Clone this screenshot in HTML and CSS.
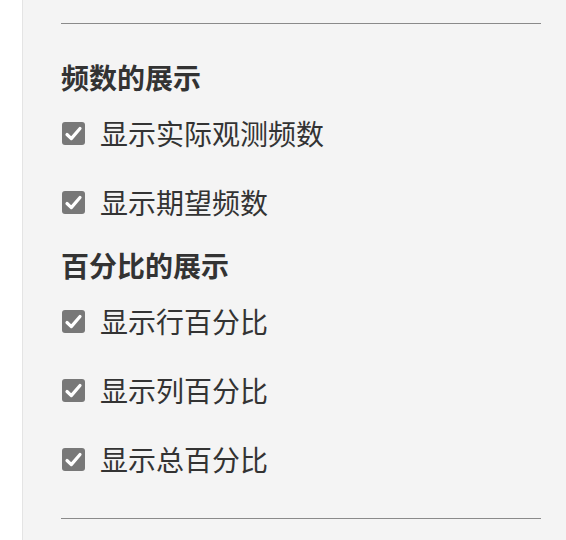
FILE: index.html
```html
<!DOCTYPE html>
<html lang="zh-CN">
<head>
  <meta charset="UTF-8" />
  <title>列联表选项</title>
  <link rel="stylesheet" href="styles.css">
</head>
<body>

<!-- Options panel -->
<div class="panel">
  <hr class="divider" />

  <h3 class="section-title">频数的展示</h3>
  <label class="option">
    <input type="checkbox" checked />
    <span class="box"><svg viewBox="0 0 23 23"><path d="M5 12.5 L9.3 16.6 L18 6.5" /></svg></span>
    显示实际观测频数
  </label>
  <label class="option">
    <input type="checkbox" checked />
    <span class="box"><svg viewBox="0 0 23 23"><path d="M5 12.5 L9.3 16.6 L18 6.5" /></svg></span>
    显示期望频数
  </label>

  <h3 class="section-title">百分比的展示</h3>
  <label class="option">
    <input type="checkbox" checked />
    <span class="box"><svg viewBox="0 0 23 23"><path d="M5 12.5 L9.3 16.6 L18 6.5" /></svg></span>
    显示行百分比
  </label>
  <label class="option">
    <input type="checkbox" checked />
    <span class="box"><svg viewBox="0 0 23 23"><path d="M5 12.5 L9.3 16.6 L18 6.5" /></svg></span>
    显示列百分比
  </label>
  <label class="option">
    <input type="checkbox" checked />
    <span class="box"><svg viewBox="0 0 23 23"><path d="M5 12.5 L9.3 16.6 L18 6.5" /></svg></span>
    显示总百分比
  </label>

  <hr class="divider bottom" />
</div>

</body>
</html>
```

FILE: styles.css
```css
body {
  margin: 0;
  padding: 0;
  background: #fff;
  font-family: "Noto Sans CJK SC", "Noto Sans", sans-serif;
  color: #333;
}

.panel {
  margin-left: 22px;
  min-height: 540px;
  box-sizing: border-box;
  padding: 23px 25px 0 38px;
  background-color: #f4f4f4;
  border-left: 1px solid #e4e4e4;
}

.divider {
  margin: 0;
  border: none;
  border-top: 1px solid #8a8a8a;
}

.divider.bottom {
  margin-top: 36px;
}

.section-title {
  margin: 36px 0 16px;
  font-size: 28px;
  font-weight: 700;
  line-height: 34px;
}

.option + .section-title {
  margin-top: 0;
}

.option {
  display: flex;
  align-items: center;
  height: 46px;
  margin-bottom: 23px;
  font-size: 28px;
  cursor: pointer;
}

.option input {
  display: none;
}

.box {
  width: 23px;
  height: 23px;
  margin: 0 15px 0 1px;
  border-radius: 3px;
  background-color: #787878;
  flex-shrink: 0;
}

.box svg {
  display: block;
  width: 23px;
  height: 23px;
}

.box path {
  fill: none;
  stroke: #fff;
  stroke-width: 3.2;
  stroke-linecap: round;
  stroke-linejoin: round;
}
```
